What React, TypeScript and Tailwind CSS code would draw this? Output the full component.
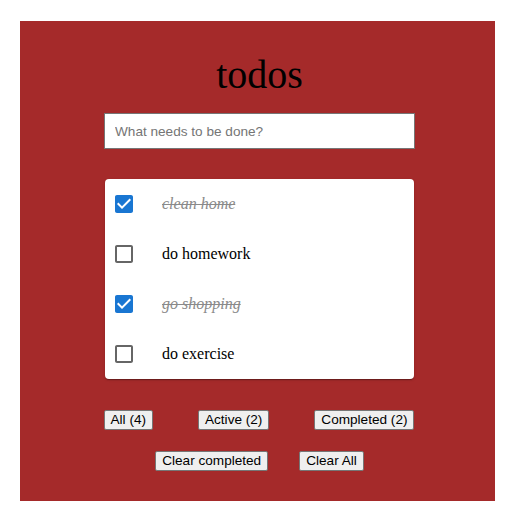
import { useState } from "react";

type Todo = { id: number; text: string; done: boolean };

const initial: Todo[] = [
  { id: 1, text: "clean home", done: true },
  { id: 2, text: "do homework", done: false },
  { id: 3, text: "go shopping", done: true },
  { id: 4, text: "do exercise", done: false },
];

const btnCls =
  "rounded-[2px] border border-[#767676] bg-[#efefef] px-[6px] py-[1px] text-[13.6px] leading-[16px] text-black font-['Liberation_Sans',Arial,sans-serif]";

function CheckIcon({ checked }: { checked: boolean }) {
  return checked ? (
    <svg viewBox="0 0 24 24" className="size-6" fill="#1976d2" aria-hidden>
      <path d="M19 3H5c-1.11 0-2 .9-2 2v14c0 1.1.89 2 2 2h14c1.11 0 2-.9 2-2V5c0-1.1-.89-2-2-2zm-9 14l-5-5 1.41-1.41L10 14.17l7.59-7.59L19 8l-9 9z" />
    </svg>
  ) : (
    <svg viewBox="0 0 24 24" className="size-6" fill="rgba(0,0,0,0.6)" aria-hidden>
      <path d="M19 5v14H5V5h14m0-2H5c-1.1 0-2 .9-2 2v14c0 1.1.9 2 2 2h14c1.1 0 2-.9 2-2V5c0-1.1-.9-2-2-2z" />
    </svg>
  );
}

export default function App() {
  const [todos, setTodos] = useState(initial);
  const [text, setText] = useState("");

  const active = todos.filter((t) => !t.done).length;
  const completed = todos.length - active;

  function toggle(id: number) {
    setTodos((ts) => ts.map((t) => (t.id === id ? { ...t, done: !t.done } : t)));
  }

  return (
    <div className="min-h-[521px] bg-white pt-[21px] pl-5">
      <div className="flex h-[480px] w-[475px] flex-col items-center bg-[#a52a2a] pt-[31px] pl-1">
        <h1 className="font-['Liberation_Serif','Times_New_Roman',serif] text-[40px] leading-[46px] text-black">
          todos
        </h1>

        <input
          value={text}
          onChange={(e) => setText(e.target.value)}
          placeholder="What needs to be done?"
          className="mt-[15px] h-9 w-[311px] border border-[#767676] bg-white px-[10px] text-[13.6px] text-black placeholder:text-[#757575] outline-none font-['Liberation_Sans',Arial,sans-serif]"
        />

        <ul className="mt-[30px] w-[309px] rounded-[4px] bg-white shadow-[0_2px_1px_-1px_rgba(0,0,0,0.2),0_1px_1px_0_rgba(0,0,0,0.14),0_1px_3px_0_rgba(0,0,0,0.12)]">
          {todos.map((t) => (
            <li key={t.id} className="flex h-[50px] items-center">
              <button onClick={() => toggle(t.id)} className="ml-[7px] mr-[26px] p-0">
                <CheckIcon checked={t.done} />
              </button>
              <span
                className={`font-['Liberation_Serif','Times_New_Roman',serif] text-[16px] ${
                  t.done ? "italic line-through text-[#8a8a8a]" : "text-black"
                }`}
              >
                {t.text}
              </span>
            </li>
          ))}
        </ul>

        <div className="mt-[31px] flex w-[312px] justify-between pr-[1px]">
          <button className={btnCls}>All ({todos.length})</button>
          <button className={btnCls}>Active ({active})</button>
          <button className={btnCls}>Completed ({completed})</button>
        </div>

        <div className="mt-[21px] flex justify-center gap-[31px]">
          <button
            className={btnCls}
            onClick={() => setTodos((ts) => ts.filter((t) => !t.done))}
          >
            Clear completed
          </button>
          <button className={btnCls} onClick={() => setTodos([])}>
            Clear All
          </button>
        </div>
      </div>
    </div>
  );
}
